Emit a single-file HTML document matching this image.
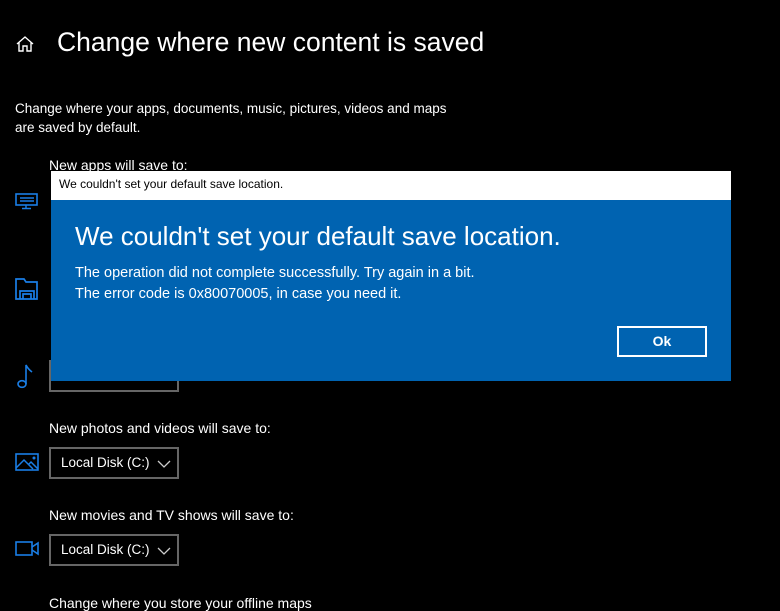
<!DOCTYPE html>
<html><head><style>
body{margin:0;width:780px;height:601px;background:#000;overflow:hidden;position:relative;font-family:"Liberation Sans",sans-serif;color:#fff}
.a{position:absolute;white-space:nowrap}
.dd{position:absolute;left:49px;width:126px;height:28px;border:2px solid #666;}
.dd span{position:absolute;left:10px;top:6px;font-size:13.5px}
.dd svg{position:absolute;left:106px;top:11px}
</style></head><body>
<svg class="a" style="left:15px;top:35px" width="20" height="18" viewBox="0 0 20 18"><path d="M2 9 L10 2 L18 9 M4 7.5 V16 H8 V11 H12 V16 H16 V7.5" fill="none" stroke="#fff" stroke-width="1.4"/></svg>
<div class="a" style="left:57px;top:27px;font-size:26.5px;font-weight:300">Change where new content is saved</div>
<div class="a" style="left:15px;top:99px;font-size:13.5px;line-height:19px">Change where your apps, documents, music, pictures, videos and maps<br>are saved by default.</div>
<div class="a" style="left:49px;top:157px;font-size:14px">New apps will save to:</div>
<svg class="a" style="left:15px;top:193px" width="24" height="17"><rect x="1" y="1" width="21" height="11" fill="none" stroke="#1a7ee6" stroke-width="1.6"/><path d="M5 5h14M5 8h14M11 12v3M7 15.5h9" stroke="#1a7ee6" stroke-width="1.4"/></svg>
<svg class="a" style="left:15px;top:277px" width="24" height="23"><path d="M1 22V2h8l2 3h11v17z M5 22V14h14v8 M8 22v-5h8v5" fill="none" stroke="#1a7ee6" stroke-width="1.7"/></svg>
<svg class="a" style="left:17px;top:363px" width="16" height="26"><ellipse cx="5" cy="21" rx="4" ry="3.3" fill="none" stroke="#1a7ee6" stroke-width="1.6"/><path d="M9 21V2q2 4 6 7" fill="none" stroke="#1a7ee6" stroke-width="1.6"/></svg>
<div class="dd" style="top:360px"></div>
<div class="a" style="left:49px;top:420px;font-size:14px">New photos and videos will save to:</div>
<svg class="a" style="left:15px;top:453px" width="25" height="19"><rect x="1" y="1" width="22" height="16" fill="none" stroke="#1a7ee6" stroke-width="1.6"/><path d="M1 15l8-8 9 9M13 12l3-3 7 7" fill="none" stroke="#1a7ee6" stroke-width="1.5"/><circle cx="19" cy="5" r="1.5" fill="#1a7ee6"/></svg>
<div class="dd" style="top:447px"><span>Local Disk (C:)</span><svg width="14" height="8"><path d="M1 1l6 6 6-6" fill="none" stroke="#ccc" stroke-width="1.3"/></svg></div>
<div class="a" style="left:49px;top:507px;font-size:14px">New movies and TV shows will save to:</div>
<svg class="a" style="left:15px;top:541px" width="25" height="15"><rect x="1" y="1" width="16" height="13" fill="none" stroke="#1a7ee6" stroke-width="1.6"/><path d="M17 6l6-4v11l-6-4" fill="none" stroke="#1a7ee6" stroke-width="1.6"/></svg>
<div class="dd" style="top:534px"><span>Local Disk (C:)</span><svg width="14" height="8"><path d="M1 1l6 6 6-6" fill="none" stroke="#ccc" stroke-width="1.3"/></svg></div>
<div class="a" style="left:49px;top:595px;font-size:14px">Change where you store your offline maps</div>

<div class="a" style="left:51px;top:171px;width:680px;height:29px;background:#fff"></div>
<div class="a" style="left:59px;top:177px;font-size:12px;color:#000">We couldn't set your default save location.</div>
<div class="a" style="left:51px;top:200px;width:680px;height:181px;background:#0063b1"></div>
<div class="a" style="left:75px;top:221px;font-size:26px;font-weight:300">We couldn't set your default save location.</div>
<div class="a" style="left:75px;top:263px;font-size:14.5px;line-height:21px">The operation did not complete successfully. Try again in a bit.<br>The error code is 0x80070005, in case you need it.</div>
<div class="a" style="left:617px;top:326px;width:86px;height:27px;border:2px solid #fff;text-align:center;line-height:27px;font-size:14px;font-weight:bold">Ok</div>
</body></html>
